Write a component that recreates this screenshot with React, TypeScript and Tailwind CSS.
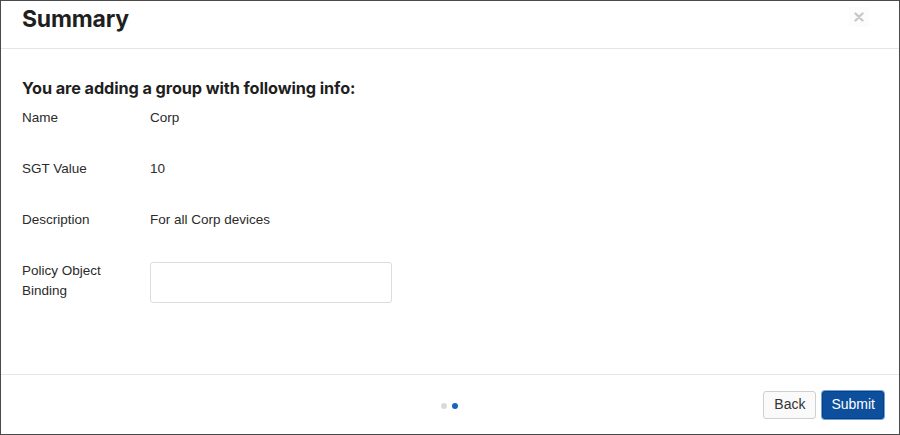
import React from 'react';

const rows = [
  { label: 'Name', value: 'Corp' },
  { label: 'SGT Value', value: '10' },
  { label: 'Description', value: 'For all Corp devices' },
];

export default function App() {
  return (
    <div className="w-[900px] h-[435px] bg-white border border-[#4a4a4a] flex flex-col font-['Liberation_Sans',Arial,sans-serif] text-[#2b2b2b]">
      <div className="h-[48px] shrink-0 border-b border-[#e6e6e6] flex items-start justify-between pl-[21px] pr-[30px] pt-[3px]">
        <h1 className="font-['Inter',sans-serif] font-bold text-[23px] leading-[30px] tracking-[-0.2px] text-[#1f1f1f]">Summary</h1>
        <button className="mt-[3px] w-[20px] h-[20px] flex items-center justify-center bg-[#fcfcfc] text-[#c8c8c8]">
          <svg width="10" height="10" viewBox="0 0 10 10">
            <path d="M1.5 1.5 L8.5 8.5 M8.5 1.5 L1.5 8.5" stroke="currentColor" strokeWidth="2.4" strokeLinecap="round" />
          </svg>
        </button>
      </div>

      <div className="flex-1 pl-[21px] pt-[27px]">
        <h2 className="font-['Inter',sans-serif] font-bold text-[16.3px] leading-[24px] tracking-[-0.1px] text-[#1f1f1f]">
          You are adding a group with following info:
        </h2>
        <div className="mt-[8px] flex flex-col gap-[31px] text-[13.5px]">
          {rows.map((r) => (
            <div key={r.label} className="flex leading-[20px]">
              <div className="w-[128px] shrink-0">{r.label}</div>
              <div>{r.value}</div>
            </div>
          ))}
          <div className="flex leading-[20px]">
            <div className="w-[128px] shrink-0">
              Policy Object
              <br />
              Binding
            </div>
            <input
              className="mt-[1px] w-[242px] h-[41px] border border-[#dcdcdc] rounded-[3px] outline-none px-2"
              type="text"
            />
          </div>
        </div>
      </div>

      <div className="h-[60px] shrink-0 border-t border-[#e6e6e6] relative flex items-center justify-end pr-[15px] gap-[6px]">
        <div className="absolute left-[440px] top-[28px] flex gap-[5px]">
          <span className="w-[6px] h-[6px] rounded-full bg-[#dadada]" />
          <span className="w-[6px] h-[6px] rounded-full bg-[#1565c0]" />
        </div>
        <button className="h-[28px] px-[10px] border border-[#cfcfcf] rounded-[3px] bg-[#fafafa] text-[14px] text-[#333]">
          Back
        </button>
        <button className="h-[28px] px-[8px] rounded-[3px] bg-[#0d4f9c] text-white text-[14px] ring-1 ring-[#6ea3db] border border-[#0a3f80]">
          Submit
        </button>
      </div>
    </div>
  );
}
